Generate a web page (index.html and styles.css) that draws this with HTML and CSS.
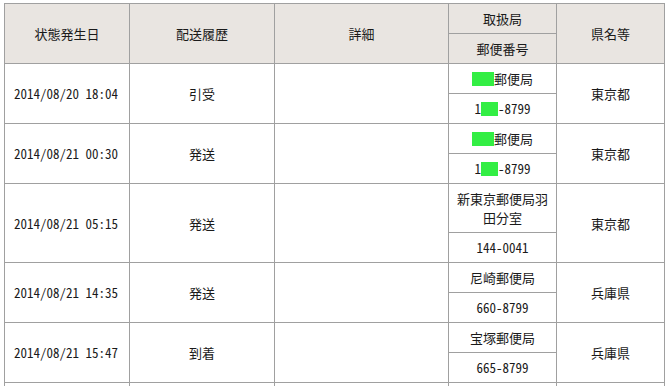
FILE: index.html
```html
<!DOCTYPE html>
<html lang="ja">
<head>
<meta charset="utf-8">
<link rel="stylesheet" href="styles.css">
</head>
<body>
<table class="track">
  <colgroup>
    <col class="c-date"><col class="c-status"><col class="c-detail"><col class="c-office"><col class="c-pref">
  </colgroup>
  <thead>
    <tr><th rowspan="2">状態発生日</th><th rowspan="2">配送履歴</th><th rowspan="2">詳細</th><th class="sub">取扱局</th><th rowspan="2">県名等</th></tr>
    <tr><th class="sub">郵便番号</th></tr>
  </thead>
  <tbody>
    <tr><td rowspan="2" class="date">2014/08/20 18:04</td><td rowspan="2">引受</td><td rowspan="2"></td><td class="sub"><span class="mask m1"></span>郵便局</td><td rowspan="2">東京都</td></tr>
    <tr><td class="sub">1<span class="mask m2"></span>-8799</td></tr>
    <tr><td rowspan="2" class="date">2014/08/21 00:30</td><td rowspan="2">発送</td><td rowspan="2"></td><td class="sub"><span class="mask m1"></span>郵便局</td><td rowspan="2">東京都</td></tr>
    <tr><td class="sub">1<span class="mask m2"></span>-8799</td></tr>
    <tr><td rowspan="2" class="date">2014/08/21 05:15</td><td rowspan="2">発送</td><td rowspan="2"></td><td class="sub wrap">新東京郵便局羽田分室</td><td rowspan="2">東京都</td></tr>
    <tr><td class="sub">144-0041</td></tr>
    <tr><td rowspan="2" class="date">2014/08/21 14:35</td><td rowspan="2">発送</td><td rowspan="2"></td><td class="sub">尼崎郵便局</td><td rowspan="2">兵庫県</td></tr>
    <tr><td class="sub">660-8799</td></tr>
    <tr><td rowspan="2" class="date">2014/08/21 15:47</td><td rowspan="2">到着</td><td rowspan="2"></td><td class="sub">宝塚郵便局</td><td rowspan="2">兵庫県</td></tr>
    <tr><td class="sub">665-8799</td></tr>
    <tr class="next"><td></td><td></td><td></td><td class="sub"></td><td></td></tr>
  </tbody>
</table>
</body>
</html>
```
FILE: styles.css
```css
html, body {
  margin: 0;
  padding: 0;
  background: #ffffff;
}
body {
  padding: 3px 0 0 4px;
  font-family: "Noto Sans CJK JP", sans-serif;
  font-size: 13px;
  font-feature-settings: "hwid" 1;
  color: #1a1a1a;
  overflow: hidden;
}
.track {
  border-collapse: collapse;
  table-layout: fixed;
  width: 660px;
}
.c-date { width: 125px; }
.c-status { width: 145px; }
.c-detail { width: 174px; }
.c-office { width: 108px; }
.c-pref { width: 108px; }
.track th,
.track td {
  border: 1px solid #a0a0a0;
  padding: 0 4px;
  text-align: center;
  vertical-align: middle;
  font-weight: normal;
  line-height: 19px;
}
.track th {
  background: #e9e5e1;
}
.track .sub {
  height: 29px;
}
.track .wrap {
  height: 38px;
  padding: 5px 4px;
}
.track td.date {
  text-align: left;
  padding-left: 9px;
}
.mask {
  display: inline-block;
  background: #33ee44;
  height: 14px;
  vertical-align: -2px;
}
.m1 { width: 22px; }
.m2 { width: 17px; }
```
